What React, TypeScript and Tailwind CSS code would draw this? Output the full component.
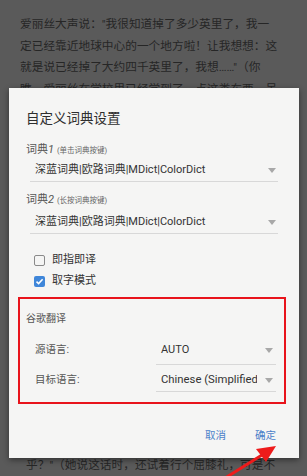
const lines = [
  '爱丽丝大声说："我很知道掉了多少英里了，我一',
  '定已经靠近地球中心的一个地方啦！让我想想：这',
  '就是说已经掉了大约四千英里了，我想……"（你',
  '瞧，爱丽丝在学校里已经学到了一点这类东西，虽',
]

const Caret = () => (
  <svg width="8" height="5" viewBox="0 0 8 5" className="shrink-0">
    <path d="M0 0 H8 L4 5 Z" fill="#a8a8a8" />
  </svg>
)

const Checkbox = ({ checked, label }: { checked?: boolean; label: string }) => (
  <div className="flex items-center h-[20px] pl-[8px] gap-[7px]">
    {checked ? (
      <div className="w-[11px] h-[11px] rounded-[2px] bg-[#3f86d9] flex items-center justify-center">
        <svg width="9" height="9" viewBox="0 0 9 9">
          <path d="M1.5 4.6 L3.6 6.6 L7.6 2.2" stroke="#fff" strokeWidth="1.5" fill="none" />
        </svg>
      </div>
    ) : (
      <div className="w-[11px] h-[11px] rounded-[2px] border-[1.5px] border-[#8a8a8a]" />
    )}
    <span className="text-[11px] leading-[20px] text-[#333]">{label}</span>
  </div>
)

const App = () => {
  return (
    <div className="relative w-[307px] h-[476px] overflow-hidden bg-[#5a5a5a] font-['Roboto','Noto_Sans_CJK_SC',sans-serif]">
      {/* reader text behind the dialog */}
      <div className="flex flex-col justify-between h-full pt-[14px] pl-[20px] text-[11.7px] leading-[21.6px] text-[#262626]">
        <div>
          {lines.map((l) => (
            <div key={l} className="whitespace-nowrap">{l}</div>
          ))}
        </div>
        <div className="whitespace-nowrap pl-[6px] -mb-[1px]">乎？"（她说这话时，还试着行个屈膝礼，可是不</div>
      </div>

      {/* dialog */}
      <div className="absolute left-[9px] top-[88px] w-[290px] h-[370px] bg-[#f5f5f4] shadow-[0_2px_6px_rgba(0,0,0,0.45)] pl-[17px] pr-[21px] pt-[20px] flex flex-col">
        <div className="text-[13.5px] leading-[20px] text-[#2e2e2e]">自定义词典设置</div>

        <div className="mt-[14px] h-[16px] leading-[16px] text-[11px] text-[#555] flex items-baseline">
          词典<i>1</i>
          <span className="ml-[3px] text-[7.5px] text-[#666]">(单击词典按键)</span>
        </div>
        <div className="mt-[2px] ml-[4px] h-[22px] border-b border-[#d8d8d8] flex items-start justify-between pl-[5px] pr-[2px]">
          <span className="text-[11px] leading-[20px] text-[#333]">深蓝词典|欧路词典|MDict|ColorDict</span>
          <div className="pt-[8px]"><Caret /></div>
        </div>

        <div className="mt-[10px] h-[16px] leading-[16px] text-[11px] text-[#555] flex items-baseline">
          词典<i>2</i>
          <span className="ml-[3px] text-[7.5px] text-[#666]">(长按词典按键)</span>
        </div>
        <div className="mt-[4px] ml-[4px] h-[22px] border-b border-[#d8d8d8] flex items-start justify-between pl-[5px] pr-[2px]">
          <span className="text-[11px] leading-[20px] text-[#333]">深蓝词典|欧路词典|MDict|ColorDict</span>
          <div className="pt-[8px]"><Caret /></div>
        </div>

        <div className="mt-[16px]">
          <Checkbox label="即指即译" />
        </div>
        <div className="mt-[1px]">
          <Checkbox checked label="取字模式" />
        </div>

        {/* highlighted section */}
        <div className="mt-[6px] -ml-[8px] w-[268px] h-[107px] border-2 border-[#e8141b] pl-[6px] pr-[8px] flex flex-col">
          <div className="mt-[12px] text-[10px] leading-[16px] text-[#555]">谷歌翻译</div>
          <div className="mt-[13px] flex items-start">
            <div className="w-[130px] pl-[9px] text-[10.5px] leading-[20px] text-[#555]">源语言:</div>
            <div className="w-[120px] h-[25px] border-b border-[#d8d8d8] flex items-start justify-between pl-[5px] pr-[3px]">
              <span className="text-[11px] leading-[20px] text-[#333]">AUTO</span>
              <div className="pt-[8px]"><Caret /></div>
            </div>
          </div>
          <div className="mt-[5px] flex items-start">
            <div className="w-[130px] pl-[9px] text-[10.5px] leading-[20px] text-[#555]">目标语言:</div>
            <div className="w-[120px] h-[22px] border-b border-[#d8d8d8] flex items-start justify-between pl-[5px] pr-[3px]">
              <span className="w-[96px] overflow-hidden whitespace-nowrap text-[11.3px] leading-[20px] text-[#333]">Chinese (Simplified)</span>
              <div className="pt-[8px]"><Caret /></div>
            </div>
          </div>
        </div>

        <div className="mt-auto mb-[14px] flex justify-end gap-[29px] pr-[2px] text-[10.5px] leading-[16px] text-[#4a7fc9]">
          <span>取消</span>
          <span>确定</span>
        </div>
      </div>

      {/* annotation arrow */}
      <svg className="absolute left-0 top-0 pointer-events-none" width="307" height="476" viewBox="0 0 307 476">
        <line x1="222" y1="480" x2="262" y2="455" stroke="#ee1b1b" strokeWidth="3" />
        <path d="M276 446 L256 449 L266 462 Z" fill="#ee1b1b" />
      </svg>
    </div>
  )
}

export default App
